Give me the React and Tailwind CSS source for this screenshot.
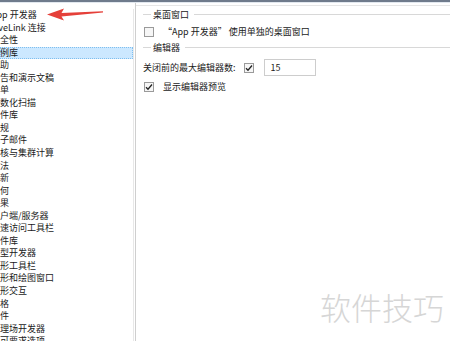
import React from "react";

const items = [
  "App 开发器",
  "LiveLink 连接",
  "安全性",
  "案例库",
  "帮助",
  "报告和演示文稿",
  "菜单",
  "参数化扫描",
  "部件库",
  "常规",
  "电子邮件",
  "多核与集群计算",
  "方法",
  "更新",
  "几何",
  "结果",
  "客户端/服务器",
  "快速访问工具栏",
  "零件库",
  "模型开发器",
  "图形工具栏",
  "图形和绘图窗口",
  "图形交互",
  "网格",
  "文件",
  "物理场开发器",
  "许可要求选项",
];

const font = { fontFamily: '"Noto Sans CJK SC", "Noto Sans", sans-serif' };

const CheckBox = ({ checked }) => (
  <div className="w-[10px] h-[10px] border border-[#9a9a9a] bg-[#f6f6f6] flex items-center justify-center shrink-0">
    {checked && (
      <svg width="8" height="8" viewBox="0 0 8 8">
        <path d="M1 4.2 L3 6.2 L7 1.5" fill="none" stroke="#222" strokeWidth="1.3" />
      </svg>
    )}
  </div>
);

const GroupHeader = ({ title }) => (
  <div className="flex items-center h-[13px] pl-[7px] mt-[2px]">
    <span className="w-[8px] h-px bg-[#d8d8d8]" />
    <span className="ml-[2px] leading-[13px]">{title}</span>
    <span className="flex-1 ml-[5px] h-px bg-[#d8d8d8]" />
  </div>
);

export default function App() {
  return (
    <div
      className="relative w-[450px] h-[341px] overflow-hidden bg-white text-[9px] text-[#1a1a1a]"
      style={font}
    >
      <div className="h-[2px] bg-[#6f7b8c]" />
      <div className="h-px bg-[#e2e8ef]" />
      <div className="flex h-[338px]">
        {/* left category list */}
        <div className="w-[136px] shrink-0 border-r border-[#cfcfcf] pt-[6px] pr-px overflow-hidden">
          <div className="border-r border-[#e8e8e8]">
            {items.map((t, i) => (
              <div
                key={i}
                className={
                  "h-[12.56px] leading-[12.56px] whitespace-nowrap overflow-hidden indent-[-9px] " +
                  (i === 3 ? "bg-[#cce8ff] outline outline-1 outline-dotted outline-[#7fbfef] -outline-offset-1" : "")
                }
              >
                {t}
              </div>
            ))}
          </div>
        </div>

        {/* right settings pane */}
        <div className="flex-1">
          <div className="mt-[2px] h-px bg-[#e6e6e6]" />
          <GroupHeader title="桌面窗口" />
          <div className="flex items-center h-[10px] mt-[6px] pl-[8px]">
            <CheckBox />
            <span className="ml-[9px] whitespace-nowrap">“App 开发器” 使用单独的桌面窗口</span>
          </div>
          <div className="mt-[4px]">
            <GroupHeader title="编辑器" />
          </div>
          <div className="flex items-center h-[17px] mt-[5px] pl-[7px]">
            <span className="whitespace-nowrap">关闭前的最大编辑器数:</span>
            <div className="ml-[8px]">
              <CheckBox checked />
            </div>
            <div className="ml-[10px] w-[52px] h-[17px] border border-[#cdcdcd] flex items-center pl-[6px]">
              15
            </div>
          </div>
          <div className="flex items-center h-[10px] mt-[6px] pl-[8px]">
            <CheckBox checked />
            <span className="ml-[9px] whitespace-nowrap">显示编辑器预览</span>
          </div>
        </div>
      </div>

      {/* red annotation arrow */}
      <svg className="absolute left-[45px] top-[5px]" width="60" height="18" viewBox="0 0 60 18">
        <path d="M2 9.5 L19 3.5 L16.5 8 L58 6.2 L58 7.6 L16.5 11.5 L19 15.5 Z" fill="#e5403a" />
      </svg>

      {/* watermark */}
      <div className="absolute left-[320px] top-[289px] text-[31px] font-light text-[#d6d6d6] leading-[36px]">
        软件技巧
      </div>
    </div>
  );
}
